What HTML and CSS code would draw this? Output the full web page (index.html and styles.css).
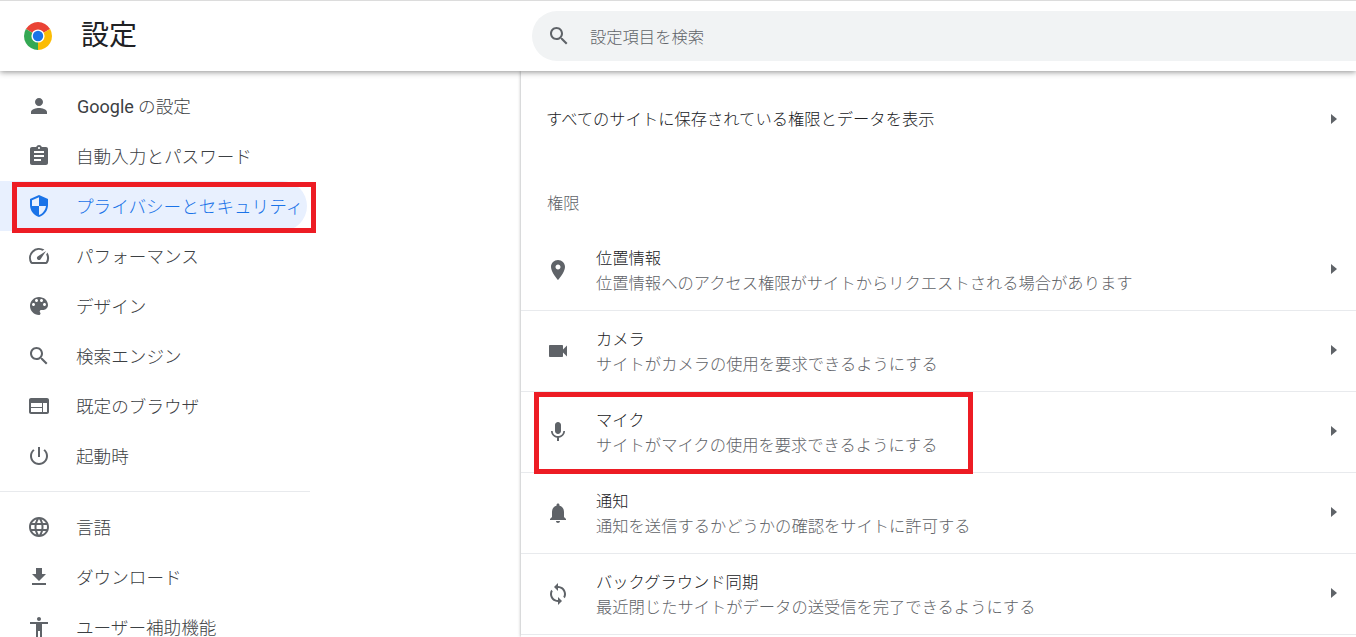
FILE: index.html
```html
<!DOCTYPE html>
<html lang="ja">
<head>
  <meta charset="UTF-8">
  <title>設定</title>
  <link rel="stylesheet" href="styles.css">
</head>
<body>

  <header class="topbar">
    <div class="brand">
      <svg class="logo" viewBox="0 0 28 28">
        <path fill="#ea4335" d="M14 14L1.88 7A14 14 0 0 1 26.12 7z"/>
        <path fill="#fbbc04" d="M14 14L26.12 7A14 14 0 0 1 14 28z"/>
        <path fill="#34a853" d="M14 14L14 28A14 14 0 0 1 1.88 7z"/>
        <circle cx="14" cy="14" r="6.6" fill="#fff"/>
        <circle cx="14" cy="14" r="5.2" fill="#1a73e8"/>
      </svg>
      <h1 class="title">設定</h1>
    </div>
    <div class="search">
      <svg class="icon" viewBox="0 0 24 24"><path d="M15.5 14h-.79l-.28-.27C15.41 12.59 16 11.11 16 9.5 16 5.91 13.09 3 9.5 3S3 5.91 3 9.5 5.91 16 9.5 16c1.61 0 3.09-.59 4.23-1.57l.27.28v.79l5 4.99L20.49 19l-4.99-5zm-6 0C7.01 14 5 11.99 5 9.5S7.01 5 9.5 5 14 7.01 14 9.5 11.99 14 9.5 14z"/></svg>
      <span class="search-text">設定項目を検索</span>
    </div>
  </header>

  <div class="page">
    <nav class="sidebar">
      <a class="nav-item">
        <svg class="icon" viewBox="0 0 24 24"><path d="M12 12c2.21 0 4-1.79 4-4s-1.79-4-4-4-4 1.79-4 4 1.79 4 4 4zm0 2c-2.67 0-8 1.34-8 4v2h16v-2c0-2.66-5.33-4-8-4z"/></svg>
        <span><b class="latin">Google</b> の設定</span>
      </a>
      <a class="nav-item">
        <svg class="icon" viewBox="0 0 24 24"><path d="M19 3h-4.18C14.4 1.84 13.3 1 12 1c-1.3 0-2.4.84-2.82 2H5c-1.1 0-2 .9-2 2v14c0 1.1.9 2 2 2h14c1.1 0 2-.9 2-2V5c0-1.1-.9-2-2-2zm-7 0c.55 0 1 .45 1 1s-.45 1-1 1-1-.45-1-1 .45-1 1-1zm2 14H7v-2h7v2zm3-4H7v-2h10v2zm0-4H7V7h10v2z"/></svg>
        <span>自動入力とパスワード</span>
      </a>
      <a class="nav-item active">
        <svg class="icon" viewBox="0 0 24 24"><path d="M12 1L3 5v6c0 5.55 3.84 10.74 9 12 5.16-1.26 9-6.45 9-12V5l-9-4zm0 10.99h7c-.53 4.12-3.28 7.79-7 8.94V12H5V6.3l7-3.11v8.8z"/></svg>
        <span>プライバシーとセキュリティ</span>
        <div class="mark mark-nav"></div>
      </a>
      <a class="nav-item">
        <svg class="icon" viewBox="0 0 24 24"><path d="M20.38 8.57l-1.23 1.85a8 8 0 0 1-.22 7.58H5.07A8 8 0 0 1 15.58 6.85l1.85-1.23A10 10 0 0 0 3.35 19a2 2 0 0 0 1.72 1h13.85a2 2 0 0 0 1.74-1 10 10 0 0 0-.27-10.44zm-9.79 6.84a2 2 0 0 0 2.83 0l5.66-8.49-8.49 5.66a2 2 0 0 0 0 2.83z"/></svg>
        <span>パフォーマンス</span>
      </a>
      <a class="nav-item">
        <svg class="icon" viewBox="0 0 24 24"><path d="M12 3c-4.97 0-9 4.03-9 9s4.03 9 9 9c.83 0 1.5-.67 1.5-1.5 0-.39-.15-.74-.39-1.01-.23-.26-.38-.61-.38-.99 0-.83.67-1.5 1.5-1.5H16c2.76 0 5-2.24 5-5 0-4.42-4.03-8-9-8zm-5.5 9c-.83 0-1.5-.67-1.5-1.5S5.67 9 6.5 9 8 9.67 8 10.5 7.33 12 6.5 12zm3-4C8.67 8 8 7.33 8 6.5S8.67 5 9.5 5s1.5.67 1.5 1.5S10.33 8 9.5 8zm5 0c-.83 0-1.5-.67-1.5-1.5S13.67 5 14.5 5s1.5.67 1.5 1.5S15.33 8 14.5 8zm3 4c-.83 0-1.5-.67-1.5-1.5S16.67 9 17.5 9s1.5.67 1.5 1.5-.67 1.5-1.5 1.5z"/></svg>
        <span>デザイン</span>
      </a>
      <a class="nav-item">
        <svg class="icon" viewBox="0 0 24 24"><path d="M15.5 14h-.79l-.28-.27C15.41 12.59 16 11.11 16 9.5 16 5.91 13.09 3 9.5 3S3 5.91 3 9.5 5.91 16 9.5 16c1.61 0 3.09-.59 4.23-1.57l.27.28v.79l5 4.99L20.49 19l-4.99-5zm-6 0C7.01 14 5 11.99 5 9.5S7.01 5 9.5 5 14 7.01 14 9.5 11.99 14 9.5 14z"/></svg>
        <span>検索エンジン</span>
      </a>
      <a class="nav-item">
        <svg class="icon" viewBox="0 0 24 24"><path d="M20 4H4c-1.1 0-1.99.9-1.99 2L2 18c0 1.1.9 2 2 2h16c1.1 0 2-.9 2-2V6c0-1.1-.9-2-2-2zm-5 14H4v-4h11v4zm0-5H4V9h11v4zm5 5h-4V9h4v9z"/></svg>
        <span>既定のブラウザ</span>
      </a>
      <a class="nav-item">
        <svg class="icon" viewBox="0 0 24 24"><path d="M13 3h-2v10h2V3zm4.83 2.17l-1.42 1.42C17.99 7.86 19 9.81 19 12c0 3.87-3.13 7-7 7s-7-3.13-7-7c0-2.19 1.01-4.14 2.58-5.42L6.17 5.17C4.23 6.82 3 9.26 3 12c0 4.97 4.03 9 9 9s9-4.03 9-9c0-2.74-1.23-5.18-3.17-6.83z"/></svg>
        <span>起動時</span>
      </a>

      <div class="nav-divider"></div>

      <a class="nav-item">
        <svg class="icon" viewBox="0 0 24 24"><path d="M11.99 2C6.47 2 2 6.48 2 12s4.47 10 9.99 10C17.52 22 22 17.52 22 12S17.52 2 11.99 2zm6.93 6h-2.95c-.32-1.25-.78-2.45-1.38-3.56 1.84.63 3.37 1.91 4.33 3.56zM12 4.04c.83 1.2 1.48 2.53 1.91 3.96h-3.82c.43-1.43 1.08-2.76 1.91-3.96zM4.26 14C4.1 13.36 4 12.69 4 12s.1-1.36.26-2h3.38c-.08.66-.14 1.32-.14 2 0 .68.06 1.34.14 2H4.26zm.82 2h2.95c.32 1.25.78 2.45 1.38 3.56-1.84-.63-3.37-1.9-4.33-3.56zm2.95-8H5.08c.96-1.66 2.49-2.93 4.33-3.56C8.81 5.55 8.35 6.75 8.03 8zM12 19.96c-.83-1.2-1.48-2.53-1.91-3.96h3.82c-.43 1.43-1.08 2.76-1.91 3.96zM14.34 14H9.66c-.09-.66-.16-1.32-.16-2 0-.68.07-1.35.16-2h4.68c.09.65.16 1.32.16 2 0 .68-.07 1.34-.16 2zm.25 5.56c.6-1.11 1.06-2.31 1.38-3.56h2.95c-.96 1.65-2.49 2.93-4.33 3.56zM16.36 14c.08-.66.14-1.32.14-2 0-.68-.06-1.34-.14-2h3.38c.16.64.26 1.31.26 2s-.1 1.36-.26 2h-3.38z"/></svg>
        <span>言語</span>
      </a>
      <a class="nav-item">
        <svg class="icon" viewBox="0 0 24 24"><path d="M19 9h-4V3H9v6H5l7 7 7-7zM5 18v2h14v-2H5z"/></svg>
        <span>ダウンロード</span>
      </a>
      <a class="nav-item">
        <svg class="icon" viewBox="0 0 24 24"><path d="M12 2c1.1 0 2 .9 2 2s-.9 2-2 2-2-.9-2-2 .9-2 2-2zm9 7h-6v13h-2v-6h-2v6H9V9H3V7h18v2z"/></svg>
        <span>ユーザー補助機能</span>
      </a>
    </nav>

    <main class="panel">
      <div class="link-row">
        <span>すべてのサイトに保存されている権限とデータを表示</span>
        <i class="arrow"></i>
      </div>

      <h2 class="section-title">権限</h2>

      <div class="row">
        <svg class="icon" viewBox="0 0 24 24"><path d="M12 2C8.13 2 5 5.13 5 9c0 5.25 7 13 7 13s7-7.75 7-13c0-3.87-3.13-7-7-7zm0 9.5c-1.38 0-2.5-1.12-2.5-2.5s1.12-2.5 2.5-2.5 2.5 1.12 2.5 2.5-1.12 2.5-2.5 2.5z"/></svg>
        <div class="row-text">
          <div class="row-title">位置情報</div>
          <div class="row-sub">位置情報へのアクセス権限がサイトからリクエストされる場合があります</div>
        </div>
        <i class="arrow"></i>
      </div>
      <div class="row">
        <svg class="icon" viewBox="0 0 24 24"><path d="M17 10.5V7c0-.55-.45-1-1-1H4c-.55 0-1 .45-1 1v10c0 .55.45 1 1 1h12c.55 0 1-.45 1-1v-3.5l4 4v-11l-4 4z"/></svg>
        <div class="row-text">
          <div class="row-title">カメラ</div>
          <div class="row-sub">サイトがカメラの使用を要求できるようにする</div>
        </div>
        <i class="arrow"></i>
      </div>
      <div class="row">
        <svg class="icon" viewBox="0 0 24 24"><path d="M12 14c1.66 0 2.99-1.34 2.99-3L15 5c0-1.66-1.34-3-3-3S9 3.34 9 5v6c0 1.66 1.34 3 3 3zm5.3-3c0 3-2.54 5.1-5.3 5.1S6.7 14 6.7 11H5c0 3.41 2.72 6.23 6 6.72V21h2v-3.28c3.28-.48 6-3.3 6-6.72h-1.7z"/></svg>
        <div class="row-text">
          <div class="row-title">マイク</div>
          <div class="row-sub">サイトがマイクの使用を要求できるようにする</div>
        </div>
        <i class="arrow"></i>
        <div class="mark mark-row"></div>
      </div>
      <div class="row">
        <svg class="icon" viewBox="0 0 24 24"><path d="M12 22c1.1 0 2-.9 2-2h-4c0 1.1.89 2 2 2zm6-6v-5c0-3.07-1.64-5.64-4.5-6.32V4c0-.83-.67-1.5-1.5-1.5s-1.5.67-1.5 1.5v.68C7.63 5.36 6 7.92 6 11v5l-2 2v1h16v-1l-2-2z"/></svg>
        <div class="row-text">
          <div class="row-title">通知</div>
          <div class="row-sub">通知を送信するかどうかの確認をサイトに許可する</div>
        </div>
        <i class="arrow"></i>
      </div>
      <div class="row">
        <svg class="icon" viewBox="0 0 24 24"><path d="M12 4V1L8 5l4 4V6c3.31 0 6 2.69 6 6 0 1.01-.25 1.97-.7 2.8l1.46 1.46C19.54 15.03 20 13.57 20 12c0-4.42-3.58-8-8-8zm0 14c-3.31 0-6-2.69-6-6 0-1.01.25-1.97.7-2.8L5.24 7.74C4.46 8.97 4 10.43 4 12c0 4.42 3.58 8 8 8v3l4-4-4-4v3z"/></svg>
        <div class="row-text">
          <div class="row-title">バックグラウンド同期</div>
          <div class="row-sub">最近閉じたサイトがデータの送受信を完了できるようにする</div>
        </div>
        <i class="arrow"></i>
      </div>
    </main>
  </div>

</body>
</html>
```

FILE: styles.css
```css
body {
  margin: 0;
  height: 100vh;
  overflow: hidden;
  background: #fff;
  color: #202124;
  font-family: Roboto, 'Noto Sans CJK JP', sans-serif;
  font-weight: 300;
  display: flex;
  flex-direction: column;
}

.icon {
  width: 24px;
  height: 24px;
  flex: none;
  fill: #5f6368;
}

/* header */
.topbar {
  position: relative;
  z-index: 2;
  flex: none;
  height: 70px;
  display: flex;
  align-items: center;
  background: #fff;
  border-top: 1px solid #dcdcdc;
  box-shadow: 0 1px 6px rgba(0,0,0,0.45);
}

.brand {
  flex: none;
  width: 508px;
  padding-left: 24px;
  display: flex;
  align-items: center;
  gap: 30px;
}

.logo {
  width: 28px;
  height: 28px;
}

.title {
  margin: 0 0 0 -1px;
  font-size: 28px;
  font-weight: 400;
  line-height: 36px;
}

.search {
  flex: 1;
  height: 50px;
  margin-top: -1px;
  padding-left: 15px;
  display: flex;
  align-items: center;
  gap: 19px;
  background: #f1f3f4;
  border-radius: 25px 0 0 25px;
}

.search-text {
  font-size: 16.3px;
  color: #5f6368;
}

/* sidebar */
.page {
  flex: 1;
  display: flex;
  min-height: 0;
}

.sidebar {
  flex: none;
  width: 521px;
  padding-top: 10px;
}

.nav-item {
  position: relative;
  box-sizing: border-box;
  width: 307px;
  height: 50px;
  padding-left: 27px;
  display: flex;
  align-items: center;
  gap: 25px;
  font-size: 17.6px;
  color: #3c4043;
  border-radius: 0 25px 25px 0;
}

.nav-item span {
  margin-bottom: 1px;
}

.latin {
  margin-left: 1px;
  font-size: 18px;
  font-weight: 400;
}

.nav-item.active {
  background: #e8f0fe;
  color: #1a73e8;
}

.nav-item.active .icon {
  fill: #1a73e8;
}

.nav-divider {
  width: 310px;
  height: 1px;
  margin: 10px 0;
  background: #e8eaed;
}

/* red marks */
.mark {
  position: absolute;
  box-sizing: border-box;
  border: 5px solid #ed1c24;
}

.mark-nav {
  top: 1px;
  left: 12px;
  width: 304px;
  height: 51px;
}

.mark-row {
  top: 0;
  left: 13px;
  width: 439px;
  height: 82px;
}

/* main panel */
.panel {
  flex: 1;
  min-width: 0;
  background: #fff;
  box-shadow: 0 0 3px rgba(60,64,67,0.5);
}

.link-row {
  height: 94px;
  padding: 0 19px 0 25px;
  display: flex;
  align-items: center;
  justify-content: space-between;
  font-size: 16.3px;
  color: #202124;
}

.link-row .arrow {
  margin-top: 2px;
}

.section-title {
  margin: 0;
  padding: 27px 26px 14px;
  font-size: 16.3px;
  font-weight: 300;
  line-height: 24px;
  color: #5f6368;
}

.row {
  position: relative;
  box-sizing: border-box;
  height: 81px;
  padding: 0 19px 0 25px;
  display: flex;
  align-items: center;
  gap: 26px;
  border-bottom: 1px solid #e8eaed;
}

.row .arrow {
  margin-bottom: 2px;
}

.row-text {
  flex: 1;
  padding-top: 2px;
}

.row-title {
  font-size: 16.3px;
  line-height: 25px;
  color: #202124;
}

.row-sub {
  font-size: 16.3px;
  line-height: 25px;
  color: #5f6368;
}

.arrow {
  flex: none;
  width: 0;
  height: 0;
  border-left: 6px solid #5f6368;
  border-top: 5.5px solid transparent;
  border-bottom: 5.5px solid transparent;
}
```
